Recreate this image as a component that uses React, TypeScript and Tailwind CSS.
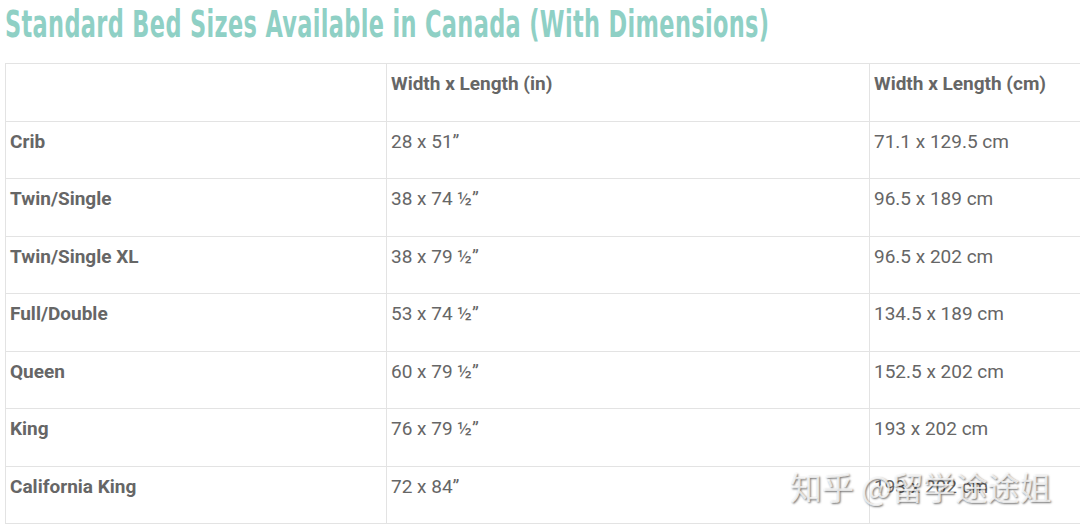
import React from "react";

type Row = {
  name: string;
  inches: string;
  cm: string;
};

const rows: Row[] = [
  { name: "Crib", inches: "28 x 51\u201D", cm: "71.1 x 129.5 cm" },
  { name: "Twin/Single", inches: "38 x 74 \u00BD\u201D", cm: "96.5 x 189 cm" },
  { name: "Twin/Single XL", inches: "38 x 79 \u00BD\u201D", cm: "96.5 x 202 cm" },
  { name: "Full/Double", inches: "53 x 74 \u00BD\u201D", cm: "134.5 x 189 cm" },
  { name: "Queen", inches: "60 x 79 \u00BD\u201D", cm: "152.5 x 202 cm" },
  { name: "King", inches: "76 x 79 \u00BD\u201D", cm: "193 x 202 cm" },
  { name: "California King", inches: "72 x 84\u201D", cm: "193 x 202 cm" },
];

const cell = "border border-[#e3e3e3] px-[4px] pt-[6px] pb-0 align-top h-[57.5px]";

export default function App() {
  return (
    <div className="relative h-[531px] w-[1080px] overflow-hidden bg-white">
      <h1
        className="ml-[5px] mt-[4px] inline-block origin-left scale-x-[0.675] whitespace-nowrap text-[37px] font-bold leading-[42px] tracking-[0.5px] text-[#8fd0c5]"
        style={{ fontFamily: '"DejaVu Sans Condensed", sans-serif' }}
      >
        Standard Bed Sizes Available in Canada (With Dimensions)
      </h1>

      <table
        className="ml-[5px] mt-[17px] w-[1130px] table-fixed border-collapse text-[19px] text-[#666666]"
        style={{ fontFamily: "Roboto, sans-serif" }}
      >
        <colgroup>
          <col className="w-[381px]" />
          <col className="w-[483px]" />
          <col />
        </colgroup>
        <thead>
          <tr>
            <th className={`${cell} text-left font-bold`}></th>
            <th className={`${cell} text-left font-bold`}>Width x Length (in)</th>
            <th className={`${cell} text-left font-bold`}>Width x Length (cm)</th>
          </tr>
        </thead>
        <tbody>
          {rows.map((row) => (
            <tr key={row.name}>
              <td className={`${cell} font-bold`}>{row.name}</td>
              <td className={cell}>{row.inches}</td>
              <td className={cell}>{row.cm}</td>
            </tr>
          ))}
        </tbody>
      </table>

      {/* watermark */}
      <div
        className="absolute left-[790px] top-[466px] text-[32px] leading-[40px] text-white/75 [text-shadow:1px_1px_2px_rgba(0,0,0,0.55)]"
        style={{ fontFamily: '"Noto Sans CJK SC", sans-serif' }}
      >
        知乎 @留学途途姐
      </div>
    </div>
  );
}
